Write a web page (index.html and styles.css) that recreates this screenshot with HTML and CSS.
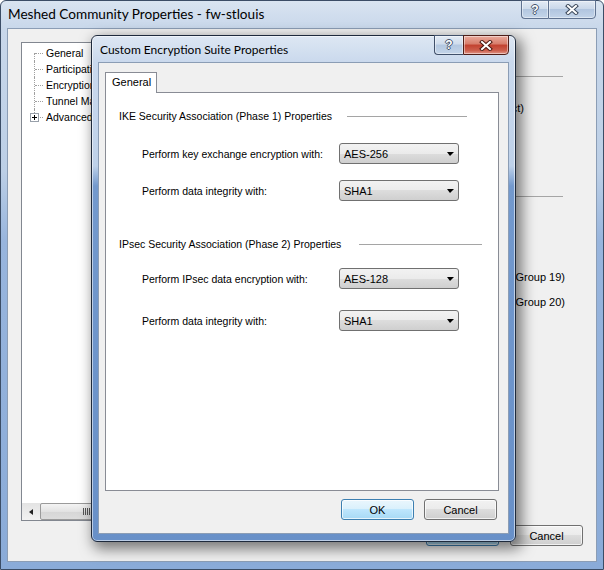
FILE: index.html
```html
<!DOCTYPE html>
<html lang="en">
  <head>
    <meta charset="UTF-8" />
    <title>Meshed Community Properties - fw-stlouis</title>
    <link rel="stylesheet" href="styles.css">
  </head>
  <body>
    <!-- parent properties window -->
    <div class="window">
      <div class="caption">
        <span class="caption-title main-title">Meshed Community Properties - fw-stlouis</span>
        <div class="caption-buttons inactive">
          <span class="cap-btn cap-help"><span class="help-glyph">?</span></span>
          <span class="cap-btn cap-close">
            <svg width="14" height="11" viewBox="0 0 14 11">
              <path d="M3 2 L11 9 M11 2 L3 9" stroke="#3d4a5c" stroke-width="4" stroke-linecap="square" fill="none" />
              <path d="M3 2 L11 9 M11 2 L3 9" stroke="#fff" stroke-width="2" stroke-linecap="square" fill="none" />
            </svg>
          </span>
        </div>
      </div>

      <div class="client">
        <div class="page">
          <div class="tree">
            <ul class="tree-list">
              <li>General</li>
              <li>Participating</li>
              <li>Encryption</li>
              <li>Tunnel Management</li>
              <li class="collapsed"><span class="expander"></span>Advanced</li>
            </ul>
            <div class="hscroll">
              <span class="scroll-arrow"><span class="arrow-left"></span></span>
              <span class="scroll-thumb"><span class="grip"></span></span>
            </div>
          </div>

          <div class="settings">
            <div class="rule rule-method"></div>
            <div class="option opt-method">(per object)</div>
            <div class="rule rule-suite"></div>
            <div class="option opt-g19">(DH Group 19)</div>
            <div class="option opt-g20">(DH Group 20)</div>
          </div>
        </div>

        <div class="footer">
          <button class="btn btn-default">OK</button>
          <button class="btn">Cancel</button>
        </div>
      </div>
    </div>

    <!-- modal dialog on top -->
    <div class="dialog">
      <div class="caption dialog-caption">
        <span class="caption-title">Custom Encryption Suite Properties</span>
        <div class="caption-buttons">
          <span class="cap-btn cap-help"><span class="help-glyph">?</span></span>
          <span class="cap-btn cap-close">
            <svg width="14" height="11" viewBox="0 0 14 11">
              <path d="M3 2 L11 9 M11 2 L3 9" stroke="#4a1810" stroke-width="4" stroke-linecap="square" fill="none" />
              <path d="M3 2 L11 9 M11 2 L3 9" stroke="#fff" stroke-width="2" stroke-linecap="square" fill="none" />
            </svg>
          </span>
        </div>
      </div>

      <div class="client dialog-client">
        <div class="tabs">
          <span class="tab">General</span>
        </div>
        <div class="panel">
          <div class="group-head head-ike">
            <span>IKE Security Association (Phase 1) Properties</span>
            <span class="head-rule"></span>
          </div>
          <div class="field field-1">
            <span>Perform key exchange encryption with:</span>
            <span class="combo">AES-256</span>
          </div>
          <div class="field field-2">
            <span>Perform data integrity with:</span>
            <span class="combo">SHA1</span>
          </div>

          <div class="group-head head-ipsec">
            <span>IPsec Security Association (Phase 2) Properties</span>
            <span class="head-rule"></span>
          </div>
          <div class="field field-3">
            <span>Perform IPsec data encryption with:</span>
            <span class="combo">AES-128</span>
          </div>
          <div class="field field-4">
            <span>Perform data integrity with:</span>
            <span class="combo">SHA1</span>
          </div>
        </div>
        <div class="footer dialog-footer">
          <button class="btn btn-default">OK</button>
          <button class="btn">Cancel</button>
        </div>
      </div>
    </div>
  </body>
</html>
```

FILE: styles.css
```css
* {
  box-sizing: border-box;
}
body {
  margin: 0;
  font-family: "Liberation Sans", Arial, sans-serif;
  font-size: 10.5px;
  color: #000;
  background: #fff;
}

/* window frames */
.window {
  width: 604px;
  height: 570px;
  display: flex;
  flex-direction: column;
  padding: 0 6px 7px;
  border: 1px solid #3b4d66;
  border-radius: 6px 6px 0 0;
  background: linear-gradient(to bottom, #d9e4f1 0, #c8d7ea 28px, #bccfe6 170px, #98b5dd 240px, #8aabd8 100%);
}
.caption {
  display: flex;
  justify-content: space-between;
  height: 27px;
  flex-shrink: 0;
}
.caption-title {
  font-family: Lato, "Liberation Sans", sans-serif;
  font-size: 12px;
  line-height: 14px;
  padding: 7px 0 0 1px;
  white-space: nowrap;
}
.main-title {
  font-size: 13.6px;
  padding-top: 6px;
}
.caption-buttons {
  display: flex;
  height: 19px;
  margin-top: -1px;
  margin-right: 1px;
}
.cap-btn {
  display: flex;
  align-items: center;
  justify-content: center;
  height: 100%;
  border: 1px solid #5f7290;
  box-shadow: inset 0 0 0 1px rgba(255, 255, 255, 0.45);
}
.cap-help {
  width: 27px;
  border-right: none;
  border-radius: 0 0 0 4px;
  background: linear-gradient(#e3ebf5 0, #cfdcec 45%, #b3c7e0 50%, #c4d5e9 100%);
}
.cap-close {
  width: 48px;
  border-radius: 0 0 4px 0;
  background: linear-gradient(#e1e9f3 0, #cad8ea 45%, #b1c5df 50%, #c3d4e9 100%);
}
.help-glyph {
  font-family: "Liberation Sans", Arial, sans-serif;
  font-weight: bold;
  font-size: 12px;
  color: #fff;
  text-shadow: 1px 0 0 #45536a, -1px 0 0 #45536a, 0 1px 0 #45536a, 0 -1px 0 #45536a;
}

.client {
  flex: 1;
  display: flex;
  flex-direction: column;
  min-height: 0;
  background: #f0f0f0;
  border: 1px solid #8b9db5;
}

/* parent window body */
.page {
  flex: 1;
  display: flex;
  min-height: 0;
  padding: 13px 0 0 13px;
}
.tree {
  width: 150px;
  display: flex;
  flex-direction: column;
  background: #fff;
  border: 1px solid #828790;
}
.tree-list {
  flex: 1;
  list-style: none;
  margin: 0;
  padding: 2px 0 0;
}
.tree-list li {
  position: relative;
  height: 16px;
  line-height: 16px;
  padding-left: 24px;
  white-space: nowrap;
}
.tree-list li::before {
  content: "";
  position: absolute;
  left: 13px;
  top: 8px;
  width: 8px;
  border-top: 1px dotted #a0a0a0;
}
.tree-list li::after {
  content: "";
  position: absolute;
  left: 12px;
  top: 0;
  height: 16px;
  border-left: 1px dotted #a0a0a0;
}
.tree-list li:first-child::after {
  top: 8px;
  height: 8px;
}
.tree-list li:last-child::after {
  height: 8px;
}
.expander {
  position: absolute;
  left: 8px;
  top: 4px;
  width: 9px;
  height: 9px;
  z-index: 1;
  border: 1px solid #98a0aa;
  background: linear-gradient(#000, #000) center / 5px 1px no-repeat,
    linear-gradient(#000, #000) center / 1px 5px no-repeat, #fff;
}
.hscroll {
  height: 17px;
  display: flex;
  flex-shrink: 0;
  background: linear-gradient(to bottom, #e3e3e3, #f2f2f2);
}
.scroll-arrow {
  width: 17px;
  display: flex;
  align-items: center;
  justify-content: center;
}
.arrow-left {
  border-top: 3px solid transparent;
  border-bottom: 3px solid transparent;
  border-right: 4px solid #222;
}
.scroll-thumb {
  width: 92px;
  margin: 0 0 0 1px;
  display: flex;
  align-items: center;
  justify-content: center;
  border: 1px solid #9a9a9a;
  border-radius: 2px;
  background: linear-gradient(to bottom, #f4f4f4, #e2e2e2 50%, #d6d6d6 51%, #dcdcdc);
}
.grip {
  width: 7px;
  height: 7px;
  background: repeating-linear-gradient(to right, #555 0, #555 1px, transparent 1px, transparent 2px);
}

.settings {
  flex: 1;
  display: flex;
  flex-direction: column;
  margin-left: 16px;
  padding-right: 31px;
  min-width: 0;
  font-size: 11px;
}
.rule {
  height: 1px;
  margin-right: 2px;
  background: #a5a5a5;
  flex-shrink: 0;
}
.rule-method {
  margin-top: 34px;
}
.rule-suite {
  margin-top: 81px;
}
.option {
  display: flex;
  justify-content: flex-end;
  height: 14px;
  line-height: 14px;
  white-space: nowrap;
  flex-shrink: 0;
}
.opt-method {
  margin-top: 24px;
  margin-right: 41px;
}
.opt-g19 {
  margin-top: 73px;
}
.opt-g20 {
  margin-top: 11px;
}

.footer {
  display: flex;
  justify-content: flex-end;
  gap: 11px;
  margin-top: 4px;
  padding: 0 13px 15px 0;
  flex-shrink: 0;
}
.btn {
  width: 73px;
  height: 21px;
  padding: 0;
  font-family: "Liberation Sans", Arial, sans-serif;
  font-size: 11px;
  color: #000;
  border: 1px solid #707070;
  border-radius: 3px;
  background: linear-gradient(#f2f2f2 0, #ebebeb 50%, #dddddd 50%, #cfcfcf 100%);
  box-shadow: inset 0 0 0 1px rgba(255, 255, 255, 0.7);
}
.btn-default {
  border-color: #3c7fb1;
  background: linear-gradient(#eaf6fd 0, #d9f0fc 50%, #bee6fd 50%, #a7d9f5 100%);
}

/* dialog */
.dialog {
  position: absolute;
  left: 91px;
  top: 35px;
  width: 425px;
  height: 507px;
  display: flex;
  flex-direction: column;
  padding: 0 6px 7px;
  border: 1px solid #1e2a3c;
  border-radius: 6px;
  background: linear-gradient(to bottom, #dde7f3 0, #cad9ed 26px, #bed1e9 130px, #7399cd 150px, #6890c8 100%);
  box-shadow: 4px 5px 14px 2px rgba(0, 0, 0, 0.5), inset 0 0 0 1px rgba(255, 255, 255, 0.55);
}
.dialog-caption {
  height: 26px;
}
.dialog-caption .caption-title {
  padding: 7px 0 0 2px;
}
.dialog-caption .caption-buttons {
  height: 20px;
  margin-right: 0;
}
.dialog-caption .cap-help {
  width: 29px;
  border-color: #40506a;
}
.dialog-caption .cap-close {
  width: 46px;
  border-color: #4f1e18;
  background: linear-gradient(#eaaa9c 0, #d77c6a 45%, #c2412f 50%, #cc5e4c 80%, #e1978a 100%);
}

.dialog-client {
  padding: 9px 9px 13px 6px;
}
.tabs {
  display: flex;
  flex-shrink: 0;
}
.tab {
  position: relative;
  z-index: 1;
  width: 52px;
  height: 21px;
  line-height: 19px;
  padding-left: 6px;
  margin-bottom: -1px;
  font-size: 11px;
  background: #fff;
  border: 1px solid #898c95;
  border-bottom: none;
}
.panel {
  flex: 1;
  display: flex;
  flex-direction: column;
  background: #fff;
  border: 1px solid #898c95;
}
.group-head {
  display: flex;
  align-items: center;
  height: 14px;
  padding-left: 13px;
  white-space: nowrap;
}
.head-rule {
  height: 1px;
  margin-left: 15px;
  background: #a5a5a5;
}
.head-ike {
  margin-top: 16px;
}
.head-ike .head-rule {
  width: 120px;
}
.head-ipsec {
  margin-top: 36px;
}
.head-ipsec .head-rule {
  width: 123px;
  margin-left: 18px;
}
.field {
  display: grid;
  grid-template-columns: 197px 120px;
  align-items: center;
  height: 21px;
  padding-left: 36px;
}
.field-1 {
  margin-top: 20px;
}
.field-2 {
  margin-top: 16px;
}
.field-3 {
  margin-top: 17px;
}
.field-4 {
  margin-top: 21px;
}
.combo {
  display: flex;
  align-items: center;
  justify-content: space-between;
  height: 21px;
  padding: 0 4px 0 4px;
  font-size: 11px;
  border: 1px solid #707070;
  border-radius: 3px;
  background: linear-gradient(#f2f2f2 0, #ebebeb 50%, #dddddd 50%, #cfcfcf 100%);
}
.combo::after {
  content: "";
  border-left: 3px solid transparent;
  border-right: 4px solid transparent;
  border-top: 4px solid #000;
}
.dialog-footer {
  gap: 10px;
  margin-top: 8px;
  padding: 0 2px 0 0;
}
```
